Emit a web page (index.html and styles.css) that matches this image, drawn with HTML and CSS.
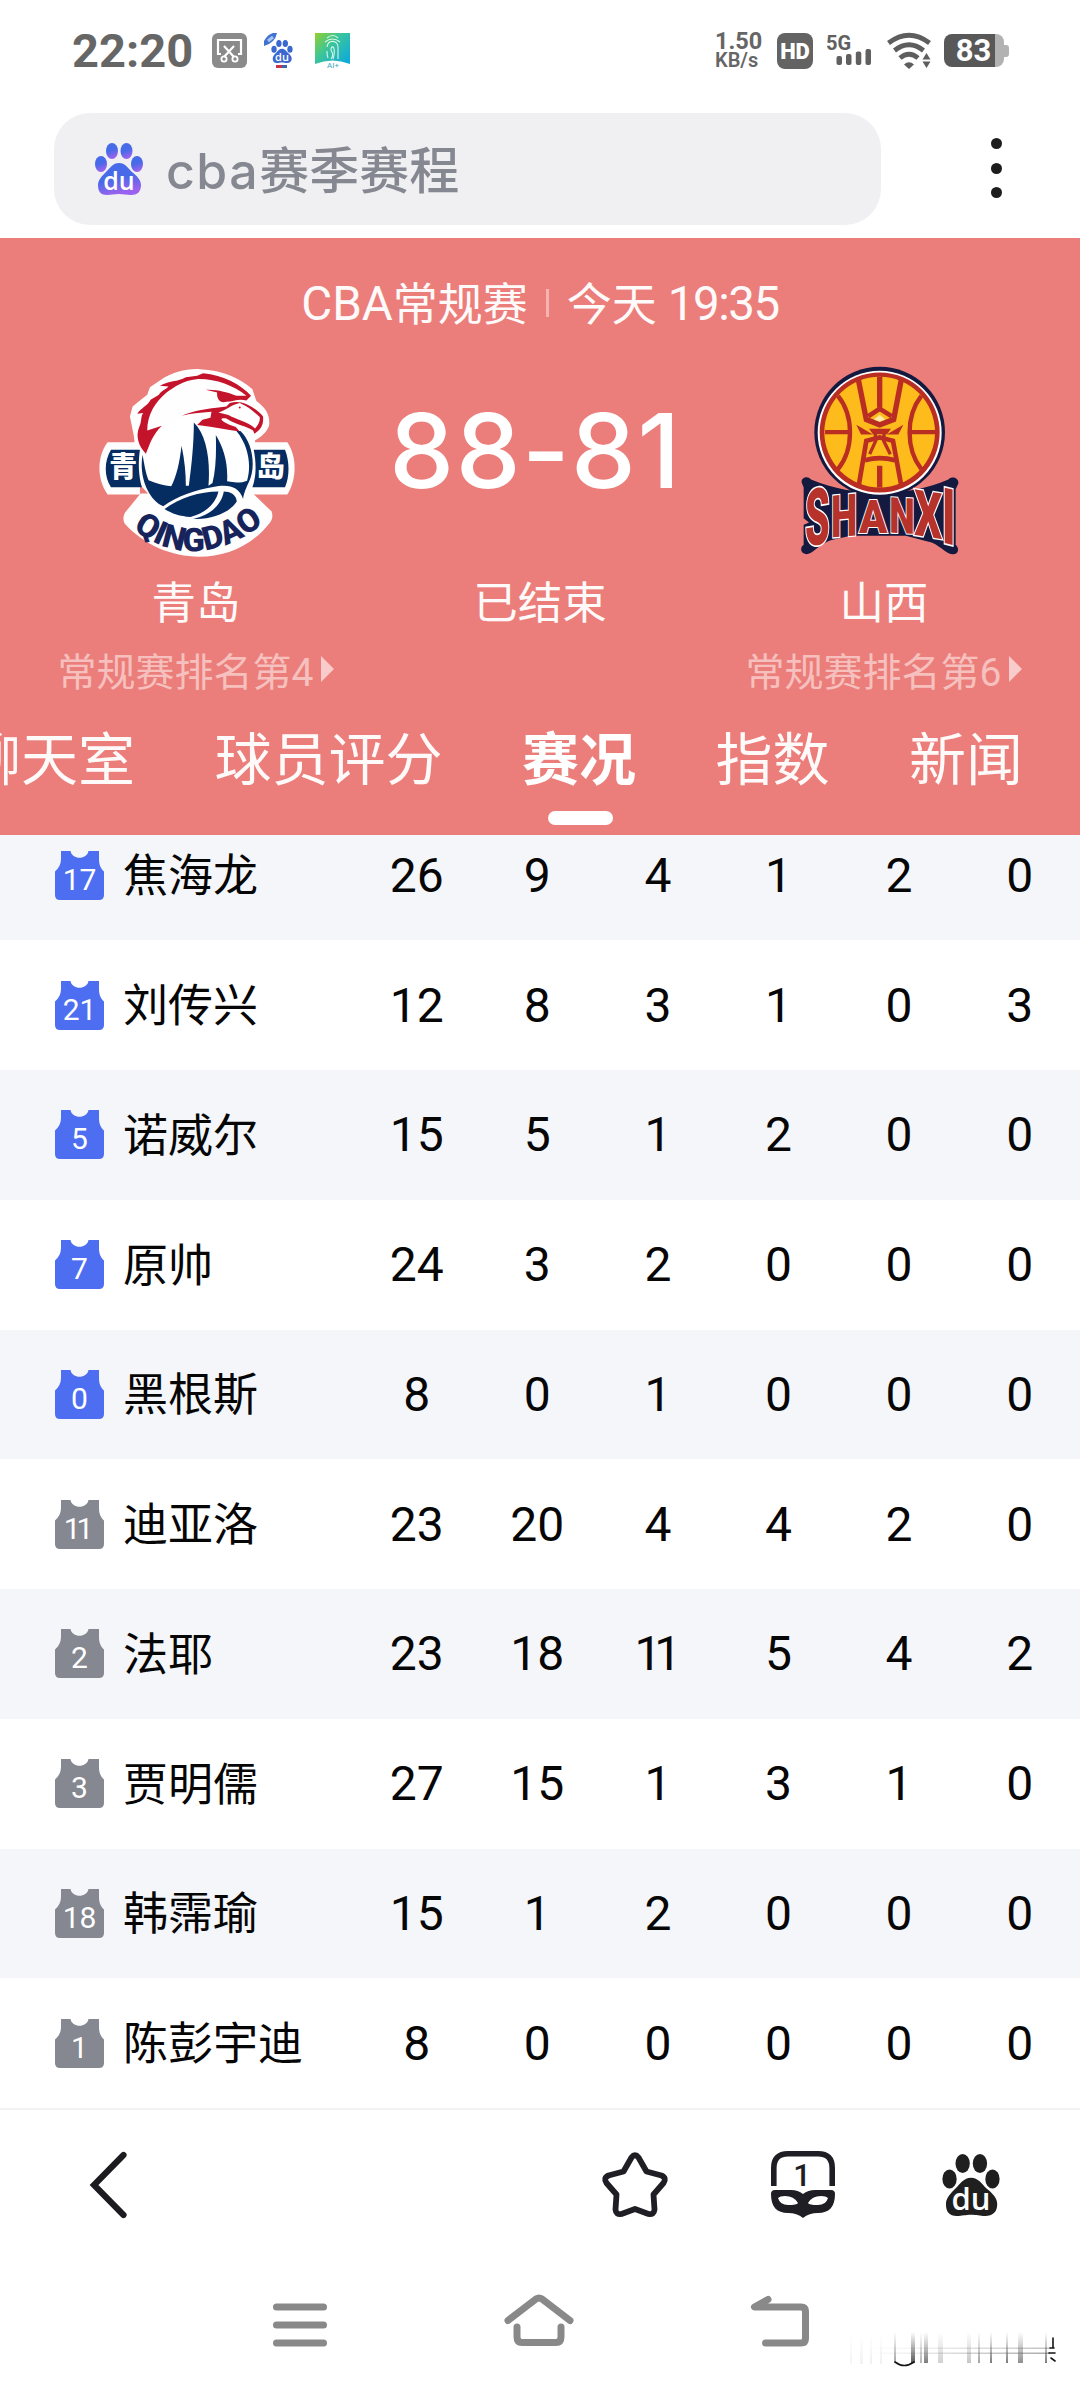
FILE: index.html
```html
<!DOCTYPE html>
<html lang="zh-CN">
<head>
  <meta charset="UTF-8">
  <meta name="viewport" content="width=device-width, initial-scale=1.0">
  <title>cba赛季赛程</title>
  <link rel="stylesheet" href="styles.css">
</head>
<body>
  <!-- shared shapes -->
  <svg class="defs" width="0" height="0">
    <symbol id="jersey" viewBox="0 0 49 49">
      <path d="M6 0H15.5C17 9 32 9 33.500 0H44V8C44 14 46 18 49 20.500V44Q49 49 44 49H5Q0 49 0 44V20.500C4 17 6 13 6 8Z"/>
    </symbol>
    <symbol id="paw" viewBox="0 0 48 52">
      <ellipse cx="17" cy="8" rx="6" ry="8"/>
      <ellipse cx="31.500" cy="8" rx="6" ry="8"/>
      <ellipse cx="6" cy="21" rx="6" ry="8"/>
      <ellipse cx="42" cy="21" rx="6" ry="8"/>
      <path d="M24 20C30 20 33 25 37 29C42 33 46 37 46 42C46 49 42 52 36 52C31 52 29 51 24 51C19 51 17 52 12 52C6 52 3 49 3 42C3 37 7 33 11 29C15 25 18 20 24 20Z"/>
    </symbol>
    <linearGradient id="pawFill" x1="0" y1="0" x2="0.300" y2="1">
      <stop offset="0.550" stop-color="#466ae8"/>
      <stop offset="1" stop-color="#9a62ee"/>
    </linearGradient>
  </svg>

  <div class="status_bar">
    <span class="clock">22:20</span>
    <svg class="status_icon shot" width="35" height="35" viewBox="0 0 35 35">
      <rect width="35" height="35" rx="6" fill="#8a8a8a"/>
      <path d="M9 21H6V7H29V21H26M12 13L22 24M22 13L12 24" fill="none" stroke="#fff" stroke-width="2.200"/>
      <circle cx="12" cy="26" r="2.600" fill="none" stroke="#fff" stroke-width="1.800"/>
      <circle cx="23" cy="26" r="2.600" fill="none" stroke="#fff" stroke-width="1.800"/>
    </svg>
    <svg class="status_icon baidu" width="30" height="35" viewBox="0 0 30 35">
      <path d="M0 13V8Q4 1 9 0H13Q11 10 0 13Z" fill="#3f73cf"/>
      <path d="M4 8L9 4" stroke="#a9c6f2" stroke-width="3"/>
      <use href="#paw" x="7" y="7" width="22" height="23" fill="#3a68d0"/>
      <text x="18" y="27.500" class="du_text small">du</text>
      <rect x="12" y="32" width="6" height="3" fill="#c8324a"/>
      <rect x="18" y="32" width="5" height="3" fill="#3d66a8"/>
    </svg>
    <svg class="status_icon ai" width="35" height="35" viewBox="0 0 35 35">
      <linearGradient id="aiFill" x1="0" y1="0" x2="1" y2="0.800">
        <stop offset="0" stop-color="#93d02a"/>
        <stop offset="0.450" stop-color="#3cc59a"/>
        <stop offset="1" stop-color="#10abd8"/>
      </linearGradient>
      <path d="M0 0H35V31Q17.500 24 0 31Z" fill="url(#aiFill)"/>
      <path d="M12 5Q18 0 23 5M10 9Q17.500 3 25 9M12 14C13 6 23 7 23 14V26M12 18C12 22 12 23 13 25M16 26C20 21 16 18 16 17C16 13 19 13 19 16C20 20 19 23 18 26" fill="none" stroke="#d8f7e4" stroke-width="1.100"/>
      <text x="18" y="34.500" class="ai_text">AI+</text>
    </svg>
    <div class="net_speed">
      <span class="speed_num">1.50</span>
      <span class="speed_unit">KB/s</span>
    </div>
    <span class="hd">HD</span>
    <svg class="signal" width="46" height="36" viewBox="0 0 46 36">
      <text x="0" y="17" class="five_g">5G</text>
      <rect x="10.500" y="23" width="5.500" height="9" rx="2"/>
      <rect x="20" y="21" width="5.500" height="11" rx="2"/>
      <rect x="29.800" y="18.500" width="5.500" height="13.500" rx="2"/>
      <rect x="39.500" y="16" width="5.500" height="16" rx="2"/>
    </svg>
    <svg class="wifi" width="45" height="36" viewBox="0 0 45 36">
      <g fill="none" stroke="#5e5e5e" stroke-width="4.800">
        <path d="M1.500 10Q22 -5.500 42.500 10"/>
        <path d="M7.500 17.500Q22 6 36.500 17.500"/>
        <path d="M13 25Q22 17.500 31 25"/>
      </g>
      <path d="M17 31.500Q22 27 27 31.500L22 36Z" fill="#5e5e5e"/>
      <path d="M39.500 16L46 28H33Z" fill="#fff"/>
      <path d="M39.500 20L43.500 26.500H35.500ZM39.500 35L43.500 28.500H35.500Z" fill="#5e5e5e"/>
    </svg>
    <div class="battery">
      <span class="battery_body">83</span>
      <span class="battery_tip"></span>
    </div>
  </div>

  <div class="search_row">
    <div class="search_box">
      <svg class="search_logo" width="48" height="52" viewBox="0 0 48 52">
        <use href="#paw" width="48" height="52" fill="url(#pawFill)"/>
        <text x="24" y="47" class="du_text">du</text>
      </svg>
      <span class="search_text"><span>cba</span>赛季赛程</span>
    </div>
    <div class="more"><i></i><i></i><i></i></div>
  </div>

  <div class="match">
    <div class="match_title"><span class="latin">CBA</span>常规赛<i class="divider"></i>今天<span class="latin time">19:35</span></div>
    <div class="teams">
      <div class="team">
        <svg class="logo" width="195" height="189" viewBox="117 85 586 567">
          <g fill="#fffefe">
            <path d="M210 230L218 200L240 182L262 165L270 142L300 122C340 95 380 86 420 88C490 90 545 118 578 148L590 184C618 205 632 226 628 258C620 280 605 290 586 302L590 430L550 500L300 500L235 430L222 290Z"/>
            <path d="M143 308H240V465H143C110 420 110 350 143 308Z"/>
            <path d="M570 308H683C712 350 712 420 683 465H570Z"/>
            <path d="M242 462L580 462L636 516C640 530 638 540 630 550C520 690 310 680 194 552C188 540 190 528 196 518Z"/>
          </g>
          <circle cx="415" cy="385" r="158" fill="#fff"/>
          <g fill="#052d62">
            <path d="M153 330H240C234 370 236 408 246 443H153C132 410 132 365 153 330Z"/>
            <path d="M582 330H676C690 365 690 410 676 443H578C590 410 590 370 582 330Z"/>
            <path d="M248 345C254 380 258 402 266 422C290 432 312 438 334 440C350 410 360 365 365 318C374 360 378 400 378 438H387C396 370 402 310 402 248C440 285 452 360 446 438L458 430C468 390 470 340 468 286C492 325 505 370 502 425C525 430 545 430 562 423C575 380 568 320 530 274L542 274C580 310 590 385 566 430C556 452 552 464 550 478C538 440 505 432 460 442C408 450 350 470 310 500C265 480 236 410 248 345Z"/>
            <path d="M314 508C360 475 420 456 476 456C468 490 440 520 392 532C360 530 336 522 314 508Z"/>
            <path d="M492 456C510 456 530 465 531 486C510 520 450 542 400 538C455 525 485 495 492 456Z"/>
          </g>
          <g fill="#c4142c">
            <path d="M258 342C236 320 226 290 238 262C246 245 242 228 250 220L232 222C242 205 264 198 272 180L296 166C306 150 318 150 326 140L300 138C325 122 355 126 378 112L412 108L430 100C490 105 545 135 574 168L560 182C535 176 520 186 500 186C480 192 470 176 472 158L438 150C470 148 505 158 530 168L560 168C520 136 465 116 410 118C370 122 345 140 320 158C286 186 262 225 262 272L306 258C278 285 270 312 258 342Z"/>
            <path d="M510 190C545 176 590 205 610 230C612 255 604 270 584 282L580 272C560 258 534 258 500 236C475 232 480 246 528 262L540 275C500 270 460 262 412 256L428 240L452 234L455 216C420 218 390 222 366 228C400 214 430 208 470 204L500 200Z"/>
          </g>
          <path d="M476 218C500 212 512 196 540 190C565 200 585 218 600 232C602 244 596 256 586 266C565 246 525 238 506 226Z" fill="#fff"/>
          <circle cx="540" cy="203" r="3" fill="#c4142c"/>
          <text x="190" y="411" class="badge_cn">青</text>
          <text x="633" y="411" class="badge_cn">岛</text>
          <path id="qdCurve" d="M203 556Q400 722 628 540" fill="none"/>
          <text class="qd_text"><textPath href="#qdCurve" startOffset="50%">QINGDAO</textPath></text>
        </svg>
        <span class="team_name">青岛</span>
        <span class="rank">常规赛排名第4<i></i></span>
      </div>
      <div class="score_box">
        <span class="score">88-81</span>
        <span class="team_name">已结束</span>
      </div>
      <div class="team">
        <svg class="logo shanxi" width="158" height="189" viewBox="126 76 474 566">
          <path d="M128 425C126 410 146 404 156 416C290 470 440 470 568 416C580 404 600 412 598 428L590 445V612C604 625 596 642 580 640C560 640 540 608 506 602L440 585H275L215 598C180 610 160 640 142 640C124 638 122 620 134 612V552L150 545L134 532V440Z" fill="#14193f"/>
          <circle cx="362" cy="274" r="196" fill="#14193f"/>
          <circle cx="362" cy="276" r="186" fill="#fff"/>
          <circle cx="362" cy="275" r="180" fill="#b92d22"/>
          <circle cx="362" cy="274" r="166" fill="#fdbb1c"/>
          <g fill="none" stroke="#b92d22" stroke-width="13">
            <path d="M198 274H278M448 274H528M237 165C285 225 285 325 237 385M487 165C440 225 440 325 487 385"/>
            <path d="M298 116L322 236L362 252L404 236L427 116M362 108V200M362 375V440" stroke-width="16"/>
            <path d="M328 226L362 204L398 226M300 430L322 300L362 290L402 300L426 430M318 358Q362 346 408 358" stroke-width="14"/>
            <path d="M348 268L350 300L332 340M376 268L374 300L394 340" stroke-width="10"/>
          </g>
          <path d="M292 252L342 281L306 281ZM433 252L383 281L418 281ZM330 264H396L384 280H342Z" fill="#b92d22"/>
          <path d="M345 236L362 222L379 236L362 243Z" fill="#ffe9a8"/>
          <g class="sx_text">
            <text transform="translate(138 618) skewY(-10) scale(0.740 1.480)">S</text>
            <text transform="translate(216 590) skewY(-5) scale(0.700 1.100)">H</text>
            <text transform="translate(300 575) scale(0.780 0.880)">A</text>
            <text transform="translate(391 575) skewY(3) scale(0.680 0.930)">N</text>
            <text transform="translate(466 582) skewY(9) scale(0.820 1.200)">X</text>
            <text transform="translate(548 604) skewY(14) scale(0.860 1.460)">I</text>
          </g>
        </svg>
        <span class="team_name">山西</span>
        <span class="rank">常规赛排名第6<i></i></span>
      </div>
    </div>
    <div class="tabs">
      <span>聊天室</span>
      <span>球员评分</span>
      <span class="active">赛况</span>
      <span>指数</span>
      <span>新闻</span>
    </div>
  </div>

  <div class="stats">
    <div class="row"><div class="player"><svg class="jersey" viewBox="0 0 49 49"><use href="#jersey"/><text x="24.500" y="38.500">17</text></svg><span>焦海龙</span></div><b>26</b><b>9</b><b>4</b><b>1</b><b>2</b><b>0</b></div>
    <div class="row"><div class="player"><svg class="jersey" viewBox="0 0 49 49"><use href="#jersey"/><text x="24.500" y="38.500">21</text></svg><span>刘传兴</span></div><b>12</b><b>8</b><b>3</b><b>1</b><b>0</b><b>3</b></div>
    <div class="row"><div class="player"><svg class="jersey" viewBox="0 0 49 49"><use href="#jersey"/><text x="24.500" y="38.500">5</text></svg><span>诺威尔</span></div><b>15</b><b>5</b><b>1</b><b>2</b><b>0</b><b>0</b></div>
    <div class="row"><div class="player"><svg class="jersey" viewBox="0 0 49 49"><use href="#jersey"/><text x="24.500" y="38.500">7</text></svg><span>原帅</span></div><b>24</b><b>3</b><b>2</b><b>0</b><b>0</b><b>0</b></div>
    <div class="row"><div class="player"><svg class="jersey" viewBox="0 0 49 49"><use href="#jersey"/><text x="24.500" y="38.500">0</text></svg><span>黑根斯</span></div><b>8</b><b>0</b><b>1</b><b>0</b><b>0</b><b>0</b></div>
    <div class="row"><div class="player"><svg class="jersey bench" viewBox="0 0 49 49"><use href="#jersey"/><text class="ones" x="21.500" y="38.500">11</text></svg><span>迪亚洛</span></div><b>23</b><b>20</b><b>4</b><b>4</b><b>2</b><b>0</b></div>
    <div class="row"><div class="player"><svg class="jersey bench" viewBox="0 0 49 49"><use href="#jersey"/><text x="24.500" y="38.500">2</text></svg><span>法耶</span></div><b>23</b><b>18</b><b class="ones">11</b><b>5</b><b>4</b><b>2</b></div>
    <div class="row"><div class="player"><svg class="jersey bench" viewBox="0 0 49 49"><use href="#jersey"/><text x="24.500" y="38.500">3</text></svg><span>贾明儒</span></div><b>27</b><b>15</b><b>1</b><b>3</b><b>1</b><b>0</b></div>
    <div class="row"><div class="player"><svg class="jersey bench" viewBox="0 0 49 49"><use href="#jersey"/><text x="24.500" y="38.500">18</text></svg><span>韩霈瑜</span></div><b>15</b><b>1</b><b>2</b><b>0</b><b>0</b><b>0</b></div>
    <div class="row"><div class="player"><svg class="jersey bench" viewBox="0 0 49 49"><use href="#jersey"/><text x="24.500" y="38.500">1</text></svg><span>陈彭宇迪</span></div><b>8</b><b>0</b><b>0</b><b>0</b><b>0</b><b>0</b></div>
  </div>

  <div class="toolbar">
    <svg class="back" width="40" height="70" viewBox="0 0 40 70">
      <path d="M35.500 5L6 35L35.500 65" fill="none" stroke="#1c1c20" stroke-width="6.200" stroke-linecap="round"/>
    </svg>
    <svg width="66" height="66" viewBox="0 0 66 66">
      <path d="M29.500 5.500Q33 1 36.500 5.500L44.500 19.500L59.500 23.500Q65 26 61.500 31L51.500 42.500L52.500 57.500Q52 63 46.500 62L33 57L19.500 62Q14 63 13.500 57.500L14.500 42.500L4.500 31Q1 26 6.500 23.500L21.500 19.500Z" fill="none" stroke="#1e1e24" stroke-width="5.800" stroke-linejoin="round"/>
    </svg>
    <svg width="64" height="68" viewBox="0 0 64 68">
      <path d="M2.800 35V17Q2.800 2.800 17 2.800H47Q61.200 2.800 61.200 17V35" fill="none" stroke="#1e1e24" stroke-width="5.600"/>
      <text x="31" y="35" class="page_count">1</text>
      <path fill-rule="evenodd" d="M4 39H20Q27 39 32 43Q37 39 44 39H60Q64 39 64 43C64 56 58 62 47 62Q38 62 32 67Q26 62 17 62C6 62 0 56 0 43Q0 39 4 39ZM7 47Q9 54 17 54Q26 54 27 52Q23 45 14 45Q9 45 7 47ZM57 47Q55 54 47 54Q38 54 37 52Q41 45 50 45Q55 45 57 47Z" fill="#1e1e24"/>
    </svg>
    <svg width="58" height="62" viewBox="0 0 58 62">
      <use href="#paw" width="58" height="62" fill="#1f1f1f"/>
      <text x="29" y="56" class="du_text large">du</text>
    </svg>
  </div>

  <div class="nav_bar">
    <svg width="54" height="52" viewBox="0 0 54 52">
      <path d="M3.500 12H50.500M3.500 30H50.500M3.500 48H50.500"/>
    </svg>
    <svg width="70" height="52" viewBox="0 0 70 52">
      <path d="M4 25.500L32 4Q35 2 38 4L66 25.500M13 32V42Q13 47.500 18 47.500H52Q57 47.500 57 42V32"/>
    </svg>
    <svg width="58" height="52" viewBox="0 0 58 52">
      <path d="M17 4.500L3.500 12H50Q54.500 12 54.500 16.500V43.500Q54.500 48 50 48H14.500"/>
    </svg>
    <!-- faded watermark -->
    <svg class="mark" width="240" height="40" viewBox="0 0 240 40">
      <linearGradient id="fade" x1="0" y1="0" x2="0" y2="1">
        <stop offset="0" stop-color="#555" stop-opacity="0"/>
        <stop offset="1" stop-color="#444"/>
      </linearGradient>
      <linearGradient id="fadeX" x1="0" y1="0" x2="1" y2="0">
        <stop offset="0" stop-color="#777" stop-opacity="0"/>
        <stop offset="1" stop-color="#555"/>
      </linearGradient>
      <g fill="url(#fade)">
        <rect x="74" y="2" width="2" height="31" opacity="0.500"/>
        <rect x="91" y="2" width="4" height="31" opacity="0.900"/>
        <rect x="100" y="2" width="2" height="31" opacity="0.400"/>
        <rect x="104" y="2" width="4" height="31" opacity="0.700"/>
        <rect x="118" y="2" width="5" height="31" opacity="0.250"/>
        <rect x="147" y="2" width="4" height="31" opacity="0.300"/>
        <rect x="158" y="2" width="2" height="31" opacity="0.500"/>
        <rect x="170" y="2" width="2" height="31" opacity="0.700"/>
        <rect x="186" y="2" width="2" height="31" opacity="0.700"/>
        <rect x="198" y="2" width="5" height="31" opacity="0.600"/>
        <rect x="225" y="2" width="2" height="31" opacity="0.700"/>
        <rect x="30" y="4" width="2" height="30" opacity="0.060"/>
        <rect x="40" y="4" width="3" height="30" opacity="0.070"/>
        <rect x="50" y="4" width="2" height="30" opacity="0.080"/>
        <rect x="60" y="4" width="2" height="30" opacity="0.080"/>
      </g>
      <g fill="url(#fadeX)">
        <rect x="50" y="17.500" width="180" height="1.500" opacity="0.350"/>
        <rect x="50" y="22.500" width="180" height="1.500" opacity="0.500"/>
      </g>
      <path d="M75 32Q84 39 94 32M233 8V18M230 18H234M229 23H235M231 28L235 31" fill="none" stroke="#151515" stroke-width="1.600"/>
    </svg>
  </div>
</body>
</html>
```
FILE: styles.css
```css
* {
  box-sizing: border-box;
}
body {
  margin: 0;
  width: 1080px;
  height: 2388px;
  overflow: hidden;
  display: flex;
  flex-direction: column;
  background: #fff;
  color: #060606;
  font-family: Roboto, "Noto Sans CJK SC", sans-serif;
}
svg {
  display: block;
  flex: none;
  overflow: visible;
}
.defs {
  position: absolute;
}

/* status bar */
.status_bar {
  display: flex;
  align-items: center;
  height: 101px;
  padding: 0 72px;
  color: #666;
}
.clock {
  width: 121px;
  font-size: 47px;
  font-weight: 700;
  line-height: 1;
  white-space: nowrap;
}
.status_icon.shot {
  margin-left: 19px;
}
.status_icon.baidu {
  margin-left: 17px;
}
.status_icon.ai {
  margin-left: 21px;
}
.du_text {
  fill: #fff;
  font-family: "Open Sans", sans-serif;
  font-size: 25px;
  font-weight: 600;
  text-anchor: middle;
}
.du_text.small {
  font-size: 11px;
}
.du_text.large {
  font-size: 31px;
}
.ai_text {
  fill: #35a8b8;
  font-size: 8px;
  text-anchor: middle;
}
.net_speed {
  display: flex;
  flex-direction: column;
  width: 48px;
  margin-left: auto;
  font-weight: 700;
  white-space: nowrap;
}
.speed_num {
  font-size: 23.500px;
  line-height: 19px;
}
.speed_unit {
  font-size: 20px;
  line-height: 18px;
  font-weight: 600;
}
.hd {
  width: 36px;
  height: 36px;
  margin-left: 14px;
  border-radius: 8px;
  background: #636363;
  color: #fff;
  font-size: 22px;
  font-weight: 900;
  line-height: 37px;
  text-align: center;
}
.signal {
  margin-left: 13px;
  fill: #606060;
}
.five_g {
  font-size: 20px;
  font-weight: 700;
}
.wifi {
  margin-left: 15px;
}
.battery {
  display: flex;
  align-items: center;
  margin: 0 -1px 0 12px;
}
.battery_body {
  width: 60px;
  height: 33px;
  padding-right: 1px;
  border-radius: 8px;
  background: linear-gradient(to right, #585858 51px, #b2b2b2 51px);
  color: #fff;
  font-size: 31px;
  font-weight: 700;
  line-height: 34px;
  text-align: center;
}
.battery_tip {
  width: 5px;
  height: 12px;
  border-radius: 0 3px 3px 0;
  background: #b2b2b2;
}

/* search */
.search_row {
  display: flex;
  height: 137px;
  padding: 12px 78px 0 54px;
  justify-content: space-between;
}
.search_box {
  display: flex;
  align-items: center;
  width: 827px;
  height: 112px;
  padding-left: 41px;
  border-radius: 36px;
  background: #f0f0f2;
}
.search_text {
  margin-left: 23px;
  padding-top: 4px;
  color: #858891;
  font-size: 50px;
  font-weight: 500;
  line-height: 108px;
}
.search_text span {
  font-family: Inter, sans-serif;
  letter-spacing: 1.500px;
}
.more {
  display: flex;
  flex-direction: column;
  gap: 13.500px;
  padding-top: 25px;
}
.more i {
  width: 11px;
  height: 11px;
  border-radius: 50%;
  background: #1d1d1d;
}

/* match header */
.match {
  display: flex;
  flex-direction: column;
  height: 597px;
  background: #eb7e7a;
  color: #fffafa;
  overflow: hidden;
}
.match_title {
  display: flex;
  align-items: center;
  justify-content: center;
  height: 127px;
  font-size: 45px;
}
.latin {
  padding-top: 4px;
  font-size: 47.500px;
}
.time {
  margin-left: 11px;
  letter-spacing: -1.500px;
}
.divider {
  width: 3px;
  height: 28px;
  margin: 2px 18px 0;
  background: #f4b4b1;
}
.teams {
  display: flex;
  justify-content: space-between;
  height: 335px;
  padding: 0 56px;
}
.team {
  display: flex;
  flex-direction: column;
  align-items: center;
  width: 280px;
}
.logo {
  margin-top: 3px;
}
.logo.shanxi {
  margin: 1px 7px 2px 0;
}
.team_name {
  height: 66px;
  margin-top: 14px;
  font-size: 44.500px;
  line-height: 67px;
}
.rank {
  display: flex;
  align-items: center;
  height: 64px;
  color: #f6c0be;
  font-size: 39px;
  white-space: nowrap;
}
.rank i {
  margin-left: 8px;
  border-left: 13px solid #f9cccb;
  border-top: 13px solid transparent;
  border-bottom: 13px solid transparent;
}
.score_box {
  display: flex;
  flex-direction: column;
  align-items: center;
}
.score {
  height: 192px;
  padding-right: 9px;
  color: #fff;
  font-family: Inter, sans-serif;
  font-size: 103px;
  font-weight: 500;
  line-height: 172px;
  letter-spacing: 1.500px;
  font-feature-settings: "calt" 0;
}
.tabs {
  display: flex;
  gap: 79.500px;
  margin-left: -36px;
  height: 125px;
  font-size: 57px;
  line-height: 122px;
  white-space: nowrap;
}
.tabs .active {
  position: relative;
  color: #fff;
  font-weight: 700;
}
.tabs .active::after {
  content: "";
  position: absolute;
  left: 50%;
  top: 111px;
  width: 65px;
  height: 14px;
  margin-left: -31px;
  border-radius: 7px;
  background: #fff;
}

/* player stats, scrolled under the header */
.stats {
  display: flex;
  flex-direction: column;
  justify-content: flex-end;
  height: 1273px;
  overflow: hidden;
}
.row {
  display: grid;
  grid-template-columns: 356.400px repeat(6, 120.600px);
  align-items: center;
  flex: none;
  height: 129.750px;
}
.row:nth-child(odd) {
  background: #f4f6fa;
}
.row b {
  font-size: 48px;
  font-weight: 400;
  text-align: center;
}
.row .ones {
  padding-right: 7px;
  letter-spacing: -7px;
}
.player {
  display: flex;
  align-items: center;
  padding-left: 55px;
  font-size: 45px;
  white-space: nowrap;
}
.player span {
  padding-bottom: 5px;
}
.jersey {
  width: 49px;
  height: 49px;
  margin-right: 19px;
  fill: #4e6ef2;
}
.jersey.bench {
  fill: #858791;
}
.jersey text {
  fill: #fff;
  font-size: 30px;
  text-anchor: middle;
}
.jersey .ones {
  letter-spacing: -4px;
}

/* bottom bars */
.toolbar {
  display: flex;
  align-items: center;
  height: 152px;
  padding: 0 81px 0 88px;
  border-top: 2px solid #f2f2f2;
}
.toolbar svg + svg {
  margin-left: 103px;
}
.toolbar .back + svg {
  margin-left: 474px;
}
.toolbar svg:last-child {
  margin-left: 107px;
}
.page_count {
  fill: #1e1e24;
  font-size: 31px;
  font-weight: 500;
  text-anchor: middle;
}
.nav_bar {
  position: relative;
  display: flex;
  justify-content: space-between;
  height: 128px;
  padding: 35px 271px 0 273px;
  fill: none;
  stroke: #898989;
  stroke-width: 7px;
  stroke-linecap: round;
  stroke-linejoin: round;
}
.mark {
  position: absolute;
  left: 820px;
  top: 70px;
  stroke: none;
}

/* team logos */
.badge_cn {
  fill: #fff;
  font-size: 84px;
  font-weight: 900;
  text-anchor: middle;
}
.qd_text {
  fill: #17245c;
  font-family: Roboto, sans-serif;
  font-size: 98px;
  font-weight: 900;
  text-anchor: middle;
}
.sx_text {
  fill: #b8322c;
  stroke: #fff;
  stroke-width: 7px;
  paint-order: stroke;
  font-family: Roboto, sans-serif;
  font-size: 160px;
  font-weight: 900;
}
```
